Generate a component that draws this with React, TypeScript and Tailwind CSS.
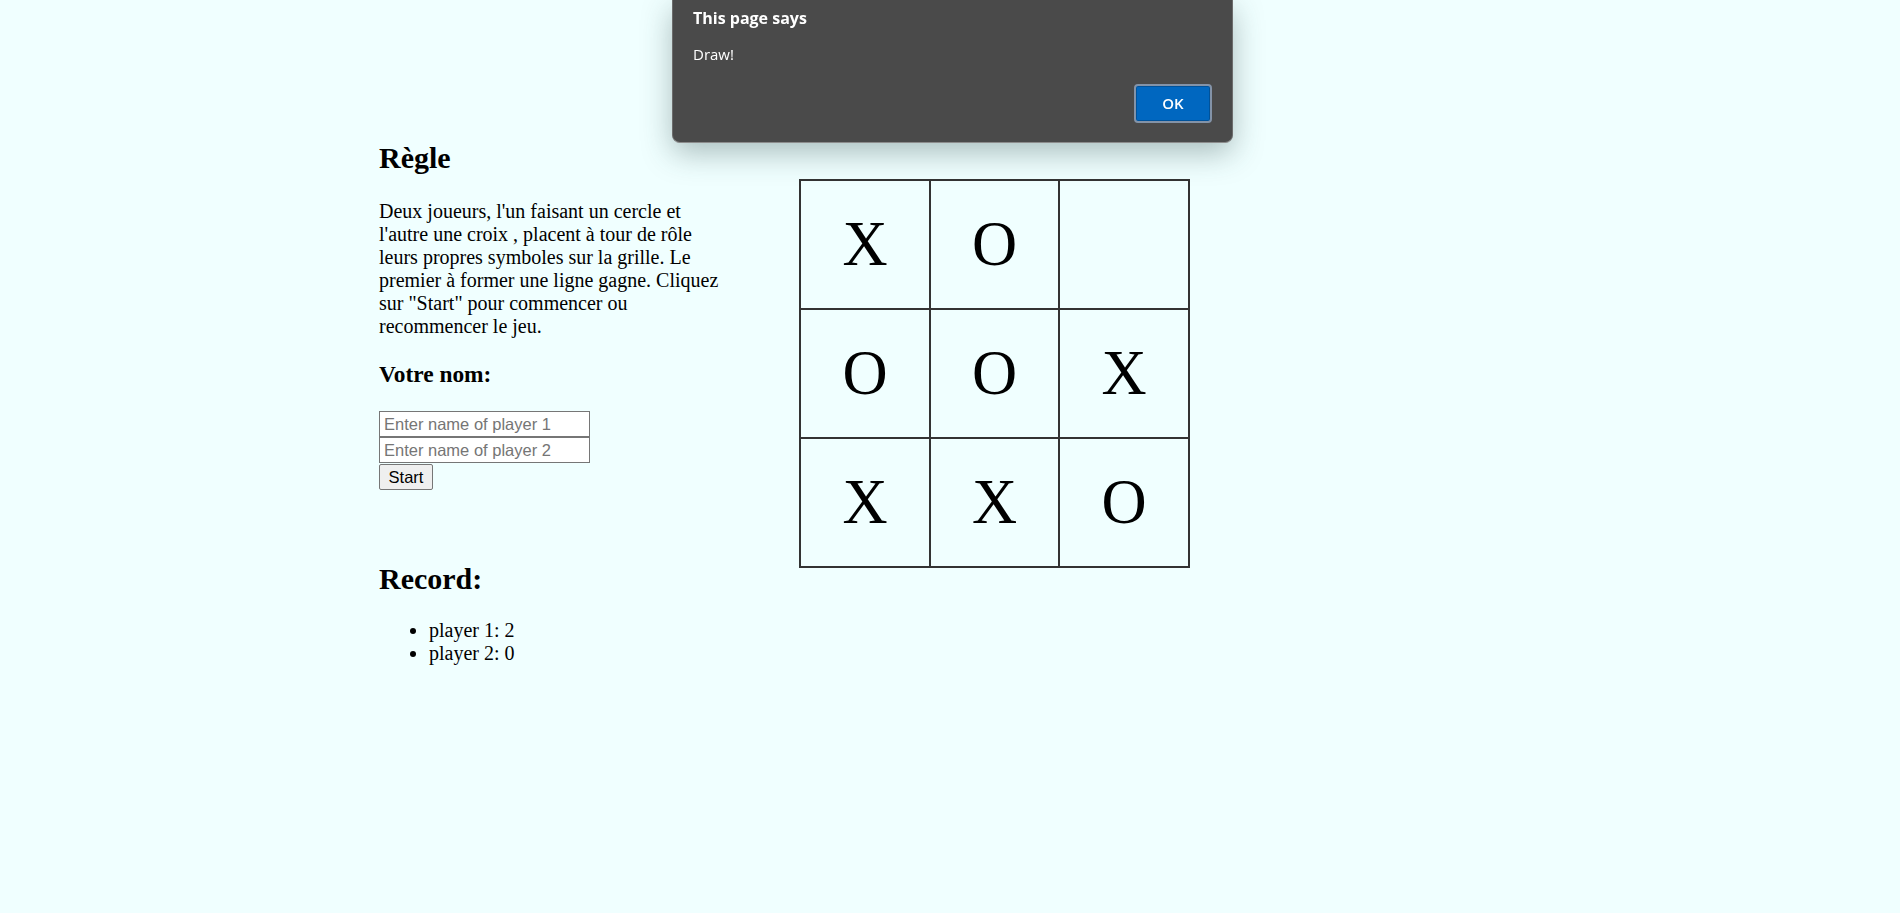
import { FC } from "react";

const board = ["X", "O", "", "O", "O", "X", "X", "X", "O"];

const Cell: FC<{ value: string }> = ({ value }) => (
    <div className="flex items-center justify-center w-full h-[127px] bg-[#f0ffff] text-[62.5px] leading-none text-black">
        {value}
    </div>
)

const AlertBox: FC = () => (
    <div className="fixed left-[672px] top-0 w-[561px] rounded-b-[8px] bg-[#4a4a4a] border border-t-0 border-[#6c6c6c] border-b-[#8c8c8c] shadow-[0_10px_30px_rgba(40,70,70,0.35)] font-['Open_Sans',sans-serif] text-white">
        <div className="pl-[20px] pt-[6px] text-[16px] font-bold leading-[24px]">This page says</div>
        <div className="pl-[20px] mt-[14px] text-[15px] leading-[20px]">Draw!</div>
        <div className="flex justify-end pr-[20px] pt-[20px] pb-[19px]">
            <button className="w-[78px] h-[39px] rounded-[4px] border-2 border-[#8393a8] bg-[#0067c0] shadow-[inset_0_0_0_1px_#00529a] text-[15px] font-semibold text-white">
                OK
            </button>
        </div>
    </div>
)

export default function App() {
    return (
        <div className="min-h-screen h-[913px] bg-[#f0ffff] font-['Liberation_Serif',serif] text-black text-[20px] leading-[23px] overflow-hidden">
            <div className="flex pl-[379px] pt-[140px]">
                <div className="w-[350px] shrink-0">
                    <h2 className="text-[30px] leading-[35px] font-bold">Règle</h2>
                    <p className="mt-[25px]">
                        Deux joueurs, l'un faisant un cercle et l'autre une croix , placent à tour de rôle leurs propres symboles sur la grille. Le premier à former une ligne gagne. Cliquez sur "Start" pour commencer ou recommencer le jeu.
                    </p>
                    <h3 className="mt-[23px] text-[23.4px] leading-[27px] font-bold">Votre nom:</h3>
                    <div className="mt-[23px] flex flex-col items-start font-['Liberation_Sans',sans-serif] text-[16.5px]">
                        <input
                            className="w-[211px] h-[26px] px-[4px] border border-[#767676] bg-white text-black placeholder:text-[#757575] outline-none"
                            placeholder="Enter name of player 1"
                        />
                        <input
                            className="w-[211px] h-[26px] px-[4px] border border-[#767676] bg-white text-black placeholder:text-[#757575] outline-none"
                            placeholder="Enter name of player 2"
                        />
                        <button className="h-[26px] w-[54px] mt-[1px] rounded-[2px] border border-[#767676] bg-[#efefef] text-black leading-none">
                            Start
                        </button>
                    </div>
                    <h2 className="mt-[71px] text-[30px] leading-[35px] font-bold">Record:</h2>
                    <ul className="mt-[23px] list-disc pl-[50px]">
                        <li>player 1: 2</li>
                        <li>player 2: 0</li>
                    </ul>
                </div>
                <div className="ml-[70px] mt-[39px] self-start grid grid-cols-[128px_127px_128px] gap-[2px] border-2 border-[#333] bg-[#333]">
                    {board.map((v, i) => (
                        <Cell key={i} value={v} />
                    ))}
                </div>
            </div>
            <AlertBox />
        </div>
    )
}
